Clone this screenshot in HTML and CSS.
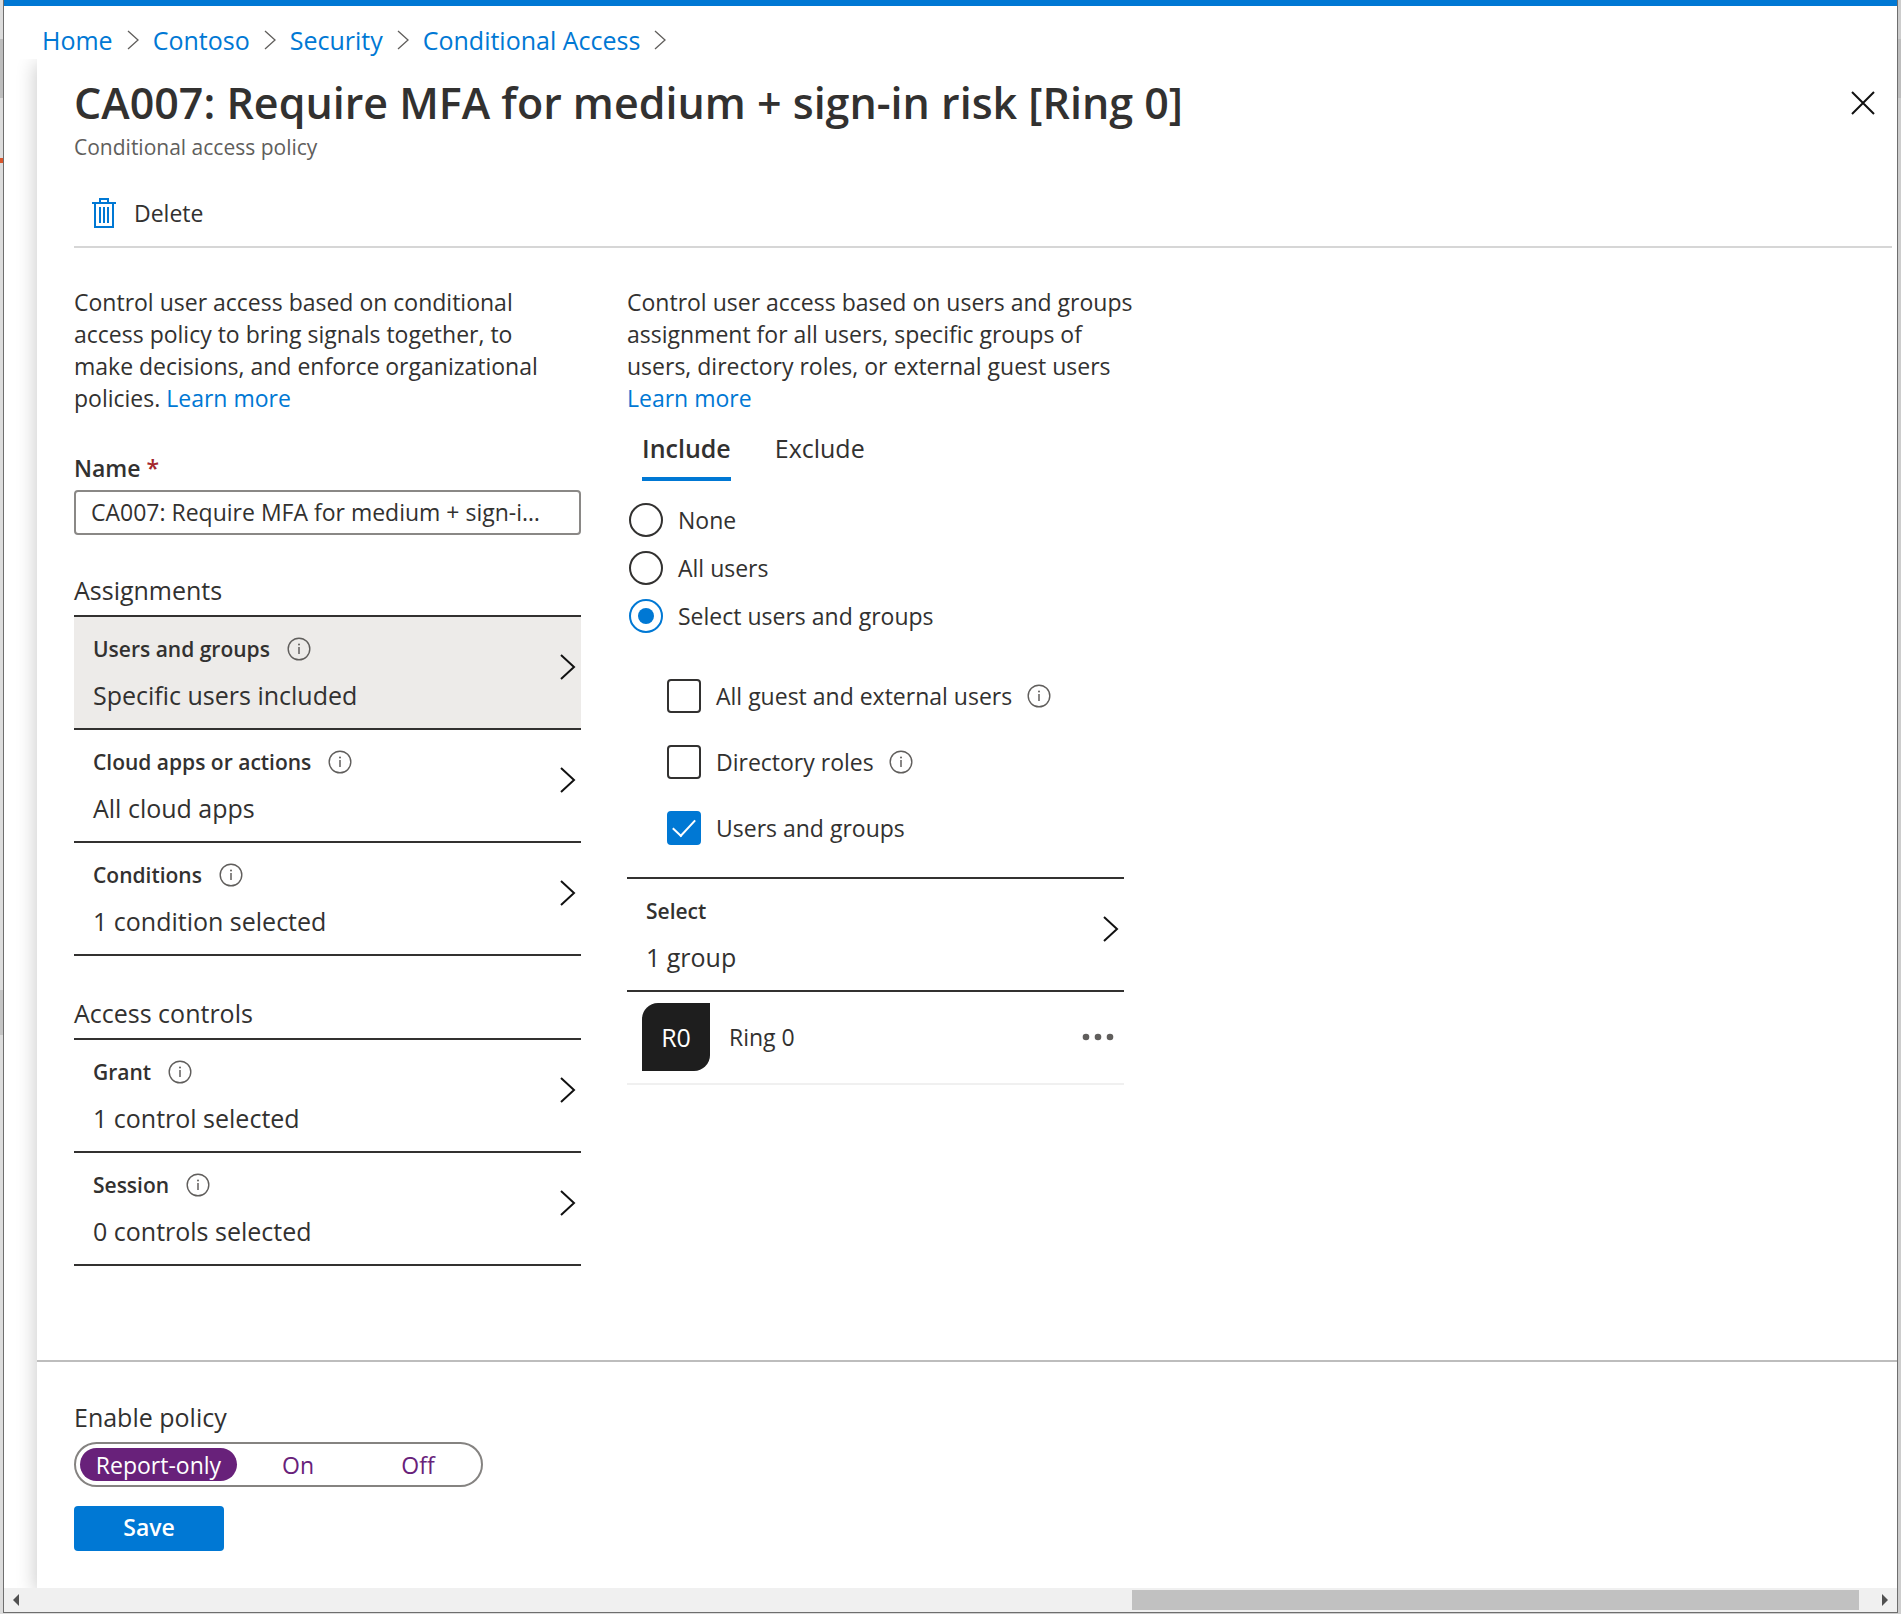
FILE: index.html
```html
<!DOCTYPE html>
<html lang="en">
<head>
<meta charset="utf-8">
<title>CA007: Require MFA for medium + sign-in risk [Ring 0]</title>
<link rel="stylesheet" href="styles.css">
</head>
<body>
<svg class="sprite" aria-hidden="true">
  <symbol id="chevron" viewBox="0 0 16 26"><path d="M1 1l13 12L1 25" fill="none" stroke="currentColor" stroke-width="2"/></symbol>
  <symbol id="crumb" viewBox="0 0 12 20"><path d="M1 1l10 9L1 19" fill="none" stroke="currentColor" stroke-width="1.3"/></symbol>
  <symbol id="info" viewBox="0 0 24 24"><circle cx="12" cy="12" r="10.8" fill="none" stroke="currentColor" stroke-width="1.4"/><path d="M12 10v7" stroke="currentColor" stroke-width="1.5"/><circle cx="12" cy="7.4" r="1" fill="currentColor"/></symbol>
</svg>
<div class="window">
  <nav class="breadcrumb" aria-label="Breadcrumb">
    <a href="#">Home</a><svg class="crumb"><use href="#crumb"/></svg>
    <a href="#">Contoso</a><svg class="crumb"><use href="#crumb"/></svg>
    <a href="#">Security</a><svg class="crumb"><use href="#crumb"/></svg>
    <a href="#">Conditional Access</a><svg class="crumb"><use href="#crumb"/></svg>
  </nav>
  <main class="blade">
    <header class="header">
      <div>
        <h1 class="title">CA007: Require MFA for medium + sign-in risk [Ring 0]</h1>
        <p class="subtitle">Conditional access policy</p>
      </div>
      <button class="close" type="button" aria-label="Close"><svg viewBox="0 0 24 24"><path d="M1 1l22 22M23 1L1 23" stroke="currentColor" stroke-width="2"/></svg></button>
    </header>
    <div class="toolbar">
      <button class="command" type="button">
        <svg class="trash" viewBox="0 0 24 30" fill="none" stroke="currentColor" stroke-width="2"><path d="M0 5h24M8 5V1h8v4M3 5v24h18V5M8 9v16M12 9v16M16 9v16"/></svg>
        Delete
      </button>
    </div>
    <div class="columns">
      <section class="policy">
        <p class="intro">Control user access based on conditional<br>access policy to bring signals together, to<br>make decisions, and enforce organizational<br>policies. <a href="#">Learn more</a></p>
        <label class="field-label" for="name">Name <span class="required">*</span></label>
        <input class="field" id="name" type="text" value="CA007: Require MFA for medium + sign-in risk [Ring 0]">
        <h2 class="group-title">Assignments</h2>
        <div class="list">
          <button class="row row-active" type="button"><span class="row-text"><span class="row-title">Users and groups<svg class="info"><use href="#info"/></svg></span><span class="row-value">Specific users included</span></span><svg class="chevron"><use href="#chevron"/></svg></button>
          <button class="row" type="button"><span class="row-text"><span class="row-title">Cloud apps or actions<svg class="info"><use href="#info"/></svg></span><span class="row-value">All cloud apps</span></span><svg class="chevron"><use href="#chevron"/></svg></button>
          <button class="row" type="button"><span class="row-text"><span class="row-title">Conditions<svg class="info"><use href="#info"/></svg></span><span class="row-value">1 condition selected</span></span><svg class="chevron"><use href="#chevron"/></svg></button>
        </div>
        <h2 class="group-title">Access controls</h2>
        <div class="list">
          <button class="row" type="button"><span class="row-text"><span class="row-title">Grant<svg class="info"><use href="#info"/></svg></span><span class="row-value">1 control selected</span></span><svg class="chevron"><use href="#chevron"/></svg></button>
          <button class="row" type="button"><span class="row-text"><span class="row-title">Session<svg class="info"><use href="#info"/></svg></span><span class="row-value">0 controls selected</span></span><svg class="chevron"><use href="#chevron"/></svg></button>
        </div>
      </section>
      <section class="scope">
        <p class="intro">Control user access based on users and groups<br>assignment for all users, specific groups of<br>users, directory roles, or external guest users<br><a href="#">Learn more</a></p>
        <div class="tabs" role="tablist">
          <button class="tab tab-active" type="button" role="tab" aria-selected="true">Include</button>
          <button class="tab" type="button" role="tab" aria-selected="false">Exclude</button>
        </div>
        <div class="radios">
          <label class="choice"><input class="radio" type="radio" name="scope">None</label>
          <label class="choice"><input class="radio" type="radio" name="scope">All users</label>
          <label class="choice"><input class="radio" type="radio" name="scope" checked>Select users and groups</label>
        </div>
        <div class="checks">
          <label class="choice"><input class="check" type="checkbox">All guest and external users<svg class="info"><use href="#info"/></svg></label>
          <label class="choice"><input class="check" type="checkbox">Directory roles<svg class="info"><use href="#info"/></svg></label>
          <label class="choice"><input class="check" type="checkbox" checked>Users and groups</label>
        </div>
        <div class="list">
          <button class="row" type="button"><span class="row-text"><span class="row-title">Select</span><span class="row-value">1 group</span></span><svg class="chevron"><use href="#chevron"/></svg></button>
        </div>
        <div class="member">
          <span class="avatar">R0</span>
          <span class="member-name">Ring 0</span>
          <button class="more" type="button" aria-label="More"><svg viewBox="0 0 32 8" fill="currentColor"><circle cx="4" cy="4" r="3.3"/><circle cx="16" cy="4" r="3.3"/><circle cx="28" cy="4" r="3.3"/></svg></button>
        </div>
      </section>
    </div>
    <footer class="footer">
      <fieldset class="enable">
        <legend class="enable-label">Enable policy</legend>
        <div class="toggle">
          <label class="option option-wide"><input type="radio" name="state" checked>Report-only</label>
          <label class="option"><input type="radio" name="state">On</label>
          <label class="option"><input type="radio" name="state">Off</label>
        </div>
      </fieldset>
      <button class="save" type="button">Save</button>
    </footer>
  </main>
  <div class="scrollbar" aria-hidden="true">
    <svg class="arrow" viewBox="0 0 6 12"><path d="M6 0v12L0 6z" fill="#505050"/></svg>
    <div class="track"><div class="thumb"></div></div>
    <svg class="arrow" viewBox="0 0 6 12"><path d="M0 0v12l6-6z" fill="#505050"/></svg>
  </div>
</div>
</body>
</html>
```
FILE: styles.css
```css
* { box-sizing: border-box; }

body {
  margin: 0;
  padding: 0 3px 1px;
  min-height: 100vh;
  display: flex;
  /* dimmed page behind the window, visible as a thin rim */
  background:
    linear-gradient(#d9562c, #d9562c) 0 158px / 3px 5px no-repeat,
    linear-gradient(#bdbdbd, #bdbdbd) 0 39px / 100% 59px no-repeat,
    linear-gradient(#c4c4c4, #c4c4c4) 0 990px / 3px 45px no-repeat,
    linear-gradient(90deg, #dcdcdc 50%, #cdcdcd 50%);
  color: #323130;
  font: 23px/32px "Open Sans", "Noto Sans", sans-serif;
}

h1, h2, p { margin: 0; font-weight: 400; }
a { color: #0078d4; text-decoration: none; }
button {
  border: 0;
  padding: 0;
  background: none;
  color: inherit;
  font: inherit;
  text-align: left;
}
svg { display: block; flex: none; }
.sprite { position: absolute; width: 0; height: 0; }

.window {
  flex: 1;
  display: flex;
  flex-direction: column;
  background: #fff;
  border: solid #6e6e6e;
  border-width: 0 1px 1px;
}

.breadcrumb {
  display: flex;
  align-items: center;
  padding: 18px 38px 3px;
  border-top: 6px solid #0078d4;
  font-size: 25px;
}
.crumb { width: 12px; height: 20px; margin: 0 14px; color: #605e5c; }

.blade {
  flex: 1;
  display: flex;
  flex-direction: column;
  margin-left: 33px;
  box-shadow: -2px 4px 18px rgba(0, 0, 0, .2);
  clip-path: inset(0 0 0 -33px);
}

.header {
  display: flex;
  justify-content: space-between;
  padding: 16px 22px 0 37px;
}
.title { font-size: 43px; line-height: 56px; font-weight: 600; }
.subtitle { margin-top: 2px; font-size: 21px; line-height: 28px; color: #605e5c; }
.close { align-self: flex-start; margin-top: 16px; color: #111; }
.close svg { width: 24px; height: 24px; }

.toolbar {
  margin: 0 5px 0 37px;
  padding: 36px 17px 17px;
  border-bottom: 2px solid #d6d6d6;
}
.command { display: flex; align-items: center; gap: 17px; }
.trash { width: 26px; height: 30px; color: #0078d4; }

.columns {
  flex: 1;
  display: flex;
  gap: 46px;
  padding: 38px 37px;
}
.policy { width: 507px; }
.scope { width: 497px; }
.intro { white-space: nowrap; }

.field-label { display: block; margin: 38px 0 6px; font-weight: 600; }
.required { color: #a4262c; }
.field {
  display: block;
  width: 100%;
  height: 45px;
  padding: 0 30px 2px 15px;
  border: 2px solid #8a8886;
  border-radius: 4px;
  color: inherit;
  font: inherit;
  text-overflow: ellipsis;
}

.group-title { margin: 39px 0 9px; font-size: 25px; }
.list + .group-title { margin-top: 41px; }
.list { border-top: 2px solid #323130; }
.row {
  display: flex;
  justify-content: space-between;
  width: 100%;
  padding: 18px 5px 17px 19px;
  border-bottom: 2px solid #323130;
}
.row-active { background: #edebe9; }
.row-text { display: grid; gap: 16px; }
.row-title {
  display: flex;
  align-items: center;
  gap: 17px;
  font-size: 21px;
  line-height: 28px;
  font-weight: 600;
}
.row-value { font-size: 25px; }
.chevron { width: 16px; height: 26px; margin-top: 19px; color: #111; }
.info { width: 24px; height: 24px; color: #605e5c; }

.tabs { display: flex; gap: 44px; margin: 18px 15px 22px; font-size: 25px; }
.tab { padding-bottom: 13px; border-bottom: 4px solid transparent; }
.tab-active { border-color: #0078d4; font-weight: 600; }

.radios { display: grid; gap: 14px; padding-left: 2px; }
.checks { display: grid; gap: 32px; padding: 46px 0 32px 40px; }
.choice { display: flex; align-items: center; height: 34px; gap: 15px; }
.radio, .check {
  appearance: none;
  flex: none;
  display: grid;
  place-items: center;
  width: 34px;
  height: 34px;
  margin: 0;
  border: 2px solid #323130;
  border-radius: 50%;
}
.radio:checked { border-color: #0078d4; }
.radio:checked::before {
  content: "";
  width: 16px;
  height: 16px;
  border-radius: 50%;
  background: #0078d4;
}
.check { border-radius: 4px; }
.check:checked { border-color: #0078d4; background: #0078d4; }
.check:checked::before {
  content: "";
  width: 20px;
  height: 10px;
  margin-bottom: 6px;
  border: solid #fff;
  border-width: 0 0 2px 2px;
  transform: rotate(-47deg);
}

.member {
  display: flex;
  align-items: center;
  padding: 11px 10px 12px 15px;
  border-bottom: 2px solid #f0f0f0;
}
.avatar {
  display: grid;
  place-items: center;
  width: 68px;
  height: 68px;
  margin-right: 19px;
  border-radius: 16px 0;
  background: #1e1e1e;
  color: #fff;
  font-size: 25px;
}
.more { margin-left: auto; color: #605e5c; }
.more svg { width: 32px; height: 8px; }

.footer { padding: 39px 37px 37px; border-top: 2px solid #bdbdbd; }
.enable { margin: 0; padding: 0; border: 0; }
.enable-label { padding: 0; margin-bottom: 9px; font-size: 25px; }
.toggle {
  display: flex;
  gap: 2px;
  width: 409px;
  height: 45px;
  padding: 4px;
  border: 2px solid #858381;
  border-radius: 23px;
}
.option {
  flex: 1;
  display: grid;
  place-items: center;
  border-radius: 17px;
  color: #68217a;
}
.option-wide { flex: 0 0 157px; }
.option input { position: absolute; opacity: 0; }
.option:has(:checked) { background: #68217a; color: #fff; }
.save {
  width: 150px;
  height: 45px;
  margin-top: 19px;
  padding-bottom: 4px;
  border-radius: 4px;
  background: #0078d4;
  color: #fff;
  font-weight: 600;
  text-align: center;
}

.scrollbar {
  display: flex;
  align-items: center;
  height: 24px;
  padding: 0 9px;
  background: #f0f0f0;
}
.arrow { width: 6px; height: 12px; }
.track { flex: 1; display: flex; justify-content: flex-end; padding: 0 23px; }
.thumb { width: 40%; height: 20px; background: #c1c1c1; }
```
